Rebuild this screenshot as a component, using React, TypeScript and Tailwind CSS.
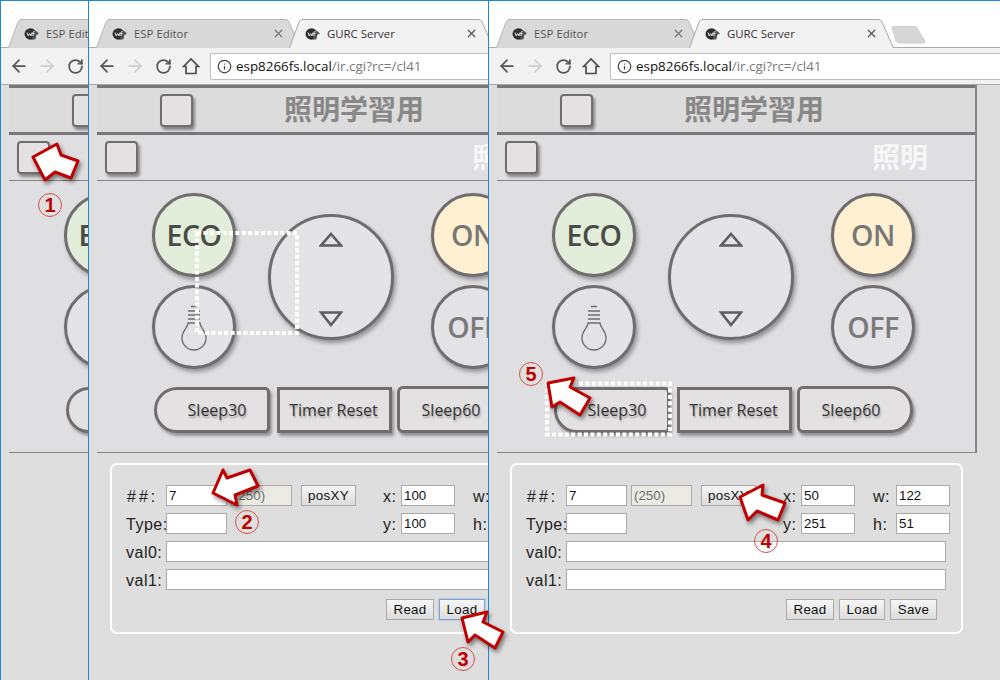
import { ArrowLeft, ArrowRight, Info, RotateCw, X } from "lucide-react";

const cjk = "[font-family:'Noto_Sans_CJK_JP',sans-serif]";

const Favicon = () => (
  <svg width="15" height="14" viewBox="0 0 15 14" className="shrink-0">
    <ellipse cx="6.5" cy="7" rx="6" ry="5.8" fill="#2e2e2e" />
    <path d="M10 3.5 Q14 4 14.8 7 L11 8 Q13 10 11 12.5 L8 12.5 Z" fill="#555" />
    <path d="M3 5.5 L4.3 9 L5.6 6.5 L6.9 9 L8 5.5 M9 9 V5.5 Q9 4.5 10.5 4.5 M8.5 6.5 H10.5" stroke="#e8e8e8" strokeWidth="1" fill="none" />
  </svg>
);

// trapezoid tab, the active one sits over the toolbar's top border
const Tab = ({ title, active }: { title: string; active?: boolean }) => (
  <div className={active ? "relative z-10 -ml-[12px] w-[205px] h-[29px] flex items-center pl-[16px] pr-[16px] pt-[1px]" : "relative ml-[7px] w-[205px] h-[28px] flex items-center pl-[16px] pr-[16px] pt-[2px]"}>
    <svg width="205" height="29" viewBox="0 0 205 29" className="absolute left-0 top-0">
      <path
        d="M0.5 29 L10 3 Q11 0.5 14 0.5 H189 Q192 0.5 193 3 L204.5 29"
        fill={active ? "#f2f2f2" : "#d9d9d9"}
        stroke={active ? "#a6a6a6" : "#b4b4b4"}
      />
    </svg>
    <span className="relative flex items-center gap-[7px] flex-1">
      <Favicon />
      <span className={`[font-family:'Open_Sans',sans-serif] text-[11.4px] ${active ? "text-[#333]" : "text-[#555]"}`}>{title}</span>
      <X size={13} strokeWidth={2.4} className={`ml-auto ${active ? "text-[#555]" : "text-[#777]"}`} />
    </span>
  </div>
);

const ToolIcon = ({ children }: { children: React.ReactNode }) => (
  <div className="w-[28px] flex items-center justify-center shrink-0">{children}</div>
);

const Toolbar = () => (
  <div className="h-[38px] bg-[#f2f2f2] border-t border-b border-[#a9a9a9] flex items-center pl-[4px] shrink-0">
    <ToolIcon><ArrowLeft size={20} strokeWidth={2.1} className="text-[#555]" /></ToolIcon>
    <ToolIcon><ArrowRight size={20} strokeWidth={2.1} className="text-[#cfcfcf]" /></ToolIcon>
    <ToolIcon><RotateCw size={17} strokeWidth={2.5} className="text-[#555]" /></ToolIcon>
    <ToolIcon>
      <svg width="18" height="18" viewBox="0 0 18 18" fill="none" stroke="#4d4d4d" strokeWidth="1.7" strokeLinejoin="miter">
        <path d="M1.5 9.5 L9 2 L16.5 9.5 H14 V16.5 H4 V9.5 Z" />
      </svg>
    </ToolIcon>
    <div className="ml-[5px] flex-1 h-[27px] bg-white border border-r-0 border-[#bcbcbc] rounded-l-[2px] flex items-center pl-[6px] [font-family:'Open_Sans',sans-serif] text-[13.4px]">
      <Info size={15} strokeWidth={2} className="text-[#444] shrink-0 mr-[4px]" />
      <span className="text-[#111]">esp8266fs.local</span>
      <span className="text-[#777]">/ir.cgi?rc=/cl41</span>
    </div>
  </div>
);

const Square = ({ className }: { className?: string }) => (
  <div className={`w-[33px] h-[33px] shrink-0 bg-[#e4e1e3] border-2 border-[#716d6e] rounded-[4px] shadow-[2px_3px_3px_rgba(0,0,0,0.4)] ${className ?? ""}`} />
);

const Round = ({ className, children }: { className?: string; children?: React.ReactNode }) => (
  <div className={`w-[84px] h-[84px] rounded-full border-[3px] border-[#716d6e] shadow-[2px_3px_4px_rgba(0,0,0,0.35)] flex items-center justify-center [font-family:'Open_Sans',sans-serif] font-semibold text-[28.5px] tracking-[-0.5px] ${className ?? ""}`}>
    {children}
  </div>
);

const Bulb = () => (
  <svg width="30" height="48" viewBox="0 0 30 48" fill="none" stroke="#6f6c6e" strokeWidth="1.3" className="mt-[4px]">
    <path d="M12 1.5 H18 M9 6 H21 M9 10 H21 M9 14 H21" strokeWidth="1.6" />
    <path d="M9 18 H21 C21 23 27 25 27 33 A12 12 0 0 1 3 33 C3 25 9 23 9 18 Z" />
  </svg>
);

const Remote = () => (
  <div className="pt-[12px] pb-[19px] pl-[55px]">
    <div className="flex items-start">
      <div className="flex flex-col gap-[8px]">
        <Round className="bg-[#e2eeda] text-[#4a4a48]">ECO</Round>
        <Round className="bg-[#e3e2e4]"><Bulb /></Round>
      </div>
      <div className="ml-[32px] mt-[21px] w-[126px] h-[126px] rounded-full bg-[#e4e3e5] border-[3px] border-[#716d6e] shadow-[2px_3px_4px_rgba(0,0,0,0.35)] flex flex-col items-center justify-between pt-[15px] pb-[10px]">
        <svg width="24" height="15" viewBox="0 0 24 15" fill="none" stroke="#5f5c5d" strokeWidth="2.6"><path d="M12 2 L22 13.5 H2 Z" /></svg>
        <svg width="24" height="16" viewBox="0 0 24 16" fill="none" stroke="#5f5c5d" strokeWidth="2.6"><path d="M12 14 L22 1.5 H2 Z" /></svg>
      </div>
      <div className="ml-[37px] flex flex-col gap-[8px]">
        <Round className="bg-[#fef0d0] text-[#777]">ON</Round>
        <Round className="bg-[#e3e2e4] text-[#7a7a7a]">OFF</Round>
      </div>
    </div>
    <div className="mt-[18px] ml-[2px] flex items-start [font-family:'Open_Sans',sans-serif] text-[16px] text-[#333] [text-shadow:1px_2px_2px_rgba(0,0,0,0.3)]">
      <div className="w-[116px] h-[46px] pl-[10px] pb-[1px] flex items-center justify-center bg-[#e4e1e3] border-[3px] border-[#716d6e] rounded-l-[23px] rounded-r-[5px] shadow-[2px_3px_3px_rgba(0,0,0,0.35)]">Sleep30</div>
      <div className="ml-[7px] w-[115px] h-[46px] pb-[1px] pr-[2px] flex items-center justify-center bg-[#e4e1e3] border-[3px] border-[#716d6e] shadow-[2px_3px_3px_rgba(0,0,0,0.35)]">Timer Reset</div>
      <div className="ml-[5px] -mt-[1px] w-[116px] h-[47px] pr-[8px] flex items-center justify-center bg-[#e4e1e3] border-[3px] border-[#716d6e] rounded-r-[23px] rounded-l-[6px] shadow-[2px_3px_3px_rgba(0,0,0,0.35)]">Sleep60</div>
    </div>
  </div>
);

const Field = ({ value, className }: { value?: string; className: string }) => (
  <input
    readOnly
    value={value ?? ""}
    className={`h-[21px] border border-[#a9a9a9] bg-white pl-[2px] text-[#111] text-[13.33px] outline-none ${className}`}
  />
);

const Btn = ({ label, className }: { label: string; className: string }) => (
  <button className={`h-[21px] border bg-gradient-to-b from-[#f7f7f7] to-[#dcdcdc] text-[13.33px] text-[#111] tracking-[0.3px] ${className}`}>
    {label}
  </button>
);

const Label = ({ text, className }: { text: string; className?: string }) => (
  <span className={`shrink-0 pt-[1px] text-[16px] leading-[21px] text-[#222] tracking-[0.5px] ${className ?? "w-[39px]"}`}>{text}</span>
);

const Form = ({ x, y, w, h, loadFocus }: { x: string; y: string; w: string; h: string; loadFocus?: boolean }) => (
  <div className="ml-[13px] mt-[10px] w-[453px] h-[171px] border-2 border-white rounded-[7px] pt-[20px] pl-[15px] [font-family:'Liberation_Sans',sans-serif] flex flex-col gap-[7px]">
    <div className="flex h-[21px]">
      <Label text="##:" className="w-[39px] tracking-[3px]" />
      <Field value="7" className="w-[61px]" />
      <input readOnly value="(250)" className="ml-[4px] w-[61px] h-[21px] border border-[#a9a9a9] bg-[#ebebe4] pl-[2px] text-[#6d6d6d] text-[13.33px] outline-none" />
      <Btn label="posXY" className="ml-[9px] w-[55px] border-[#a9a9a9]" />
      <Label text="x:" className="w-[45px] pl-[27px]" />
      <Field value={x} className="w-[54px]" />
      <Label text="w:" className="w-[41px] pl-[18px]" />
      <Field value={w} className="w-[54px]" />
    </div>
    <div className="flex h-[21px]">
      <Label text="Type:" className="w-[39px] -ml-[1px] mr-[1px]" />
      <Field className="w-[61px]" />
      <div className="w-[129px]" />
      <Label text="y:" className="w-[45px] pl-[27px]" />
      <Field value={y} className="w-[54px]" />
      <Label text="h:" className="w-[41px] pl-[18px]" />
      <Field value={h} className="w-[54px]" />
    </div>
    <div className="flex h-[21px]">
      <Label text="val0:" className="w-[39px] -ml-[1px] mr-[1px]" />
      <Field className="w-[380px]" />
    </div>
    <div className="flex h-[21px]">
      <Label text="val1:" className="w-[39px] -ml-[1px] mr-[1px]" />
      <Field className="w-[380px]" />
    </div>
    <div className="flex justify-end gap-[5px] mt-[2px] pr-[24px]">
      <Btn label="Read" className="w-[48px] border-[#a9a9a9]" />
      <Btn label="Load" className={`w-[46px] ${loadFocus ? "border-[#7da2ce] shadow-[0_0_0_1px_#b9cfe8]" : "border-[#a9a9a9]"}`} />
      <Btn label="Save" className="w-[47px] border-[#a9a9a9]" />
    </div>
  </div>
);

type WinProps = { className: string; x: string; y: string; w: string; h: string; loadFocus?: boolean; noForm?: boolean };

const BrowserWindow = ({ className, x, y, w, h, loadFocus, noForm }: WinProps) => (
  <div className={`h-full overflow-hidden border-l border-t border-[#1a87dc] bg-white shrink-0 ${className}`}>
    <div className="w-[511px] h-full flex flex-col">
      <div className="h-[18px] shrink-0" />
      <div className="flex items-start h-[28px] shrink-0">
        <Tab title="ESP Editor" />
        <Tab title="GURC Server" active />
        <svg width="36" height="18" viewBox="0 0 36 18" className="-ml-[3px] mt-[7px]">
          <path d="M1 2 Q1 0.5 3 0.5 H25 L34 15 Q34.5 17 33 17 H8 Q6 17 5 15 Z" fill="#d6d6d6" stroke="#cfcfcf" />
        </svg>
      </div>
      <Toolbar />
      <div className="flex-1 bg-[#dedede] pl-[8px]">
        <div className="w-[480px] border-r-2 border-[#858585] border-b border-b-[#858585] bg-[#dfdee0]">
          <div className="h-[50px] border-t-[3px] border-b-[3px] border-[#777] bg-[#dcdcdc] flex items-center pl-[63px]">
            <Square />
            <div className={`ml-[91px] -mt-[4px] text-[28px] leading-none font-bold text-[#888] ${cjk}`}>照明学習用</div>
          </div>
          <div className="h-[46px] border-b border-[#858585] flex items-center pl-[8px]">
            <Square />
            <div className={`ml-[334px] -mt-[4px] text-[28px] leading-none font-bold text-[#f6f6f6] ${cjk}`}>照明</div>
          </div>
          <Remote />
        </div>
        {!noForm && <Form x={x} y={y} w={w} h={h} loadFocus={loadFocus} />}
      </div>
    </div>
  </div>
);

const Num = ({ n, className }: { n: string; className: string }) => (
  <span className={`absolute w-[24px] h-[24px] rounded-full border border-[#d6504a] flex items-center justify-center [font-family:'Liberation_Sans',sans-serif] font-bold text-[20px] leading-none text-[#c00000] ${className}`}>
    {n}
  </span>
);

const arrows = [
  "33,157 57,144 61,155 78,161 71,178 55,172 45,180",
  "213,493 223,470 227,478 250,470 258,486 235,495 237,505",
  "462,618 487,612 483,622 503,632 495,648 475,635 468,642",
  "740,497 763,485 762,495 785,503 778,520 757,511 748,520",
  "548,383 574,378 570,387 590,398 580,415 560,402 552,407",
];

export default function App() {
  return (
    <div className="relative w-[1000px] h-[680px] overflow-hidden flex bg-white">
      <BrowserWindow className="w-[88px]" x="100" y="100" w="122" h="51" noForm />
      <BrowserWindow className="w-[400px]" x="100" y="100" w="122" h="51" loadFocus />
      <BrowserWindow className="w-[512px]" x="50" y="251" w="122" h="51" />

      {/* annotations on top of the three windows */}
      <svg width="1000" height="680" viewBox="0 0 1000 680" fill="none" className="absolute left-0 top-0">
        <rect x="197" y="233" width="100" height="100" stroke="#fff" strokeWidth="4" strokeDasharray="4 2.4" />
        <rect x="547" y="383.5" width="123" height="51" stroke="#fff" strokeWidth="4" strokeDasharray="4 2.4" />
        <g className="drop-shadow-[2px_3px_2px_rgba(0,0,0,0.45)]">
          {arrows.map((pts) => (
            <polygon key={pts} points={pts} fill="#fff" stroke="#c00000" strokeWidth="3" strokeLinejoin="round" />
          ))}
        </g>
      </svg>
      <Num n="1" className="left-[38px] top-[193px]" />
      <Num n="2" className="left-[235px] top-[510px]" />
      <Num n="3" className="left-[451px] top-[647px]" />
      <Num n="4" className="left-[754px] top-[529px]" />
      <Num n="5" className="left-[519px] top-[362px]" />
    </div>
  );
}
